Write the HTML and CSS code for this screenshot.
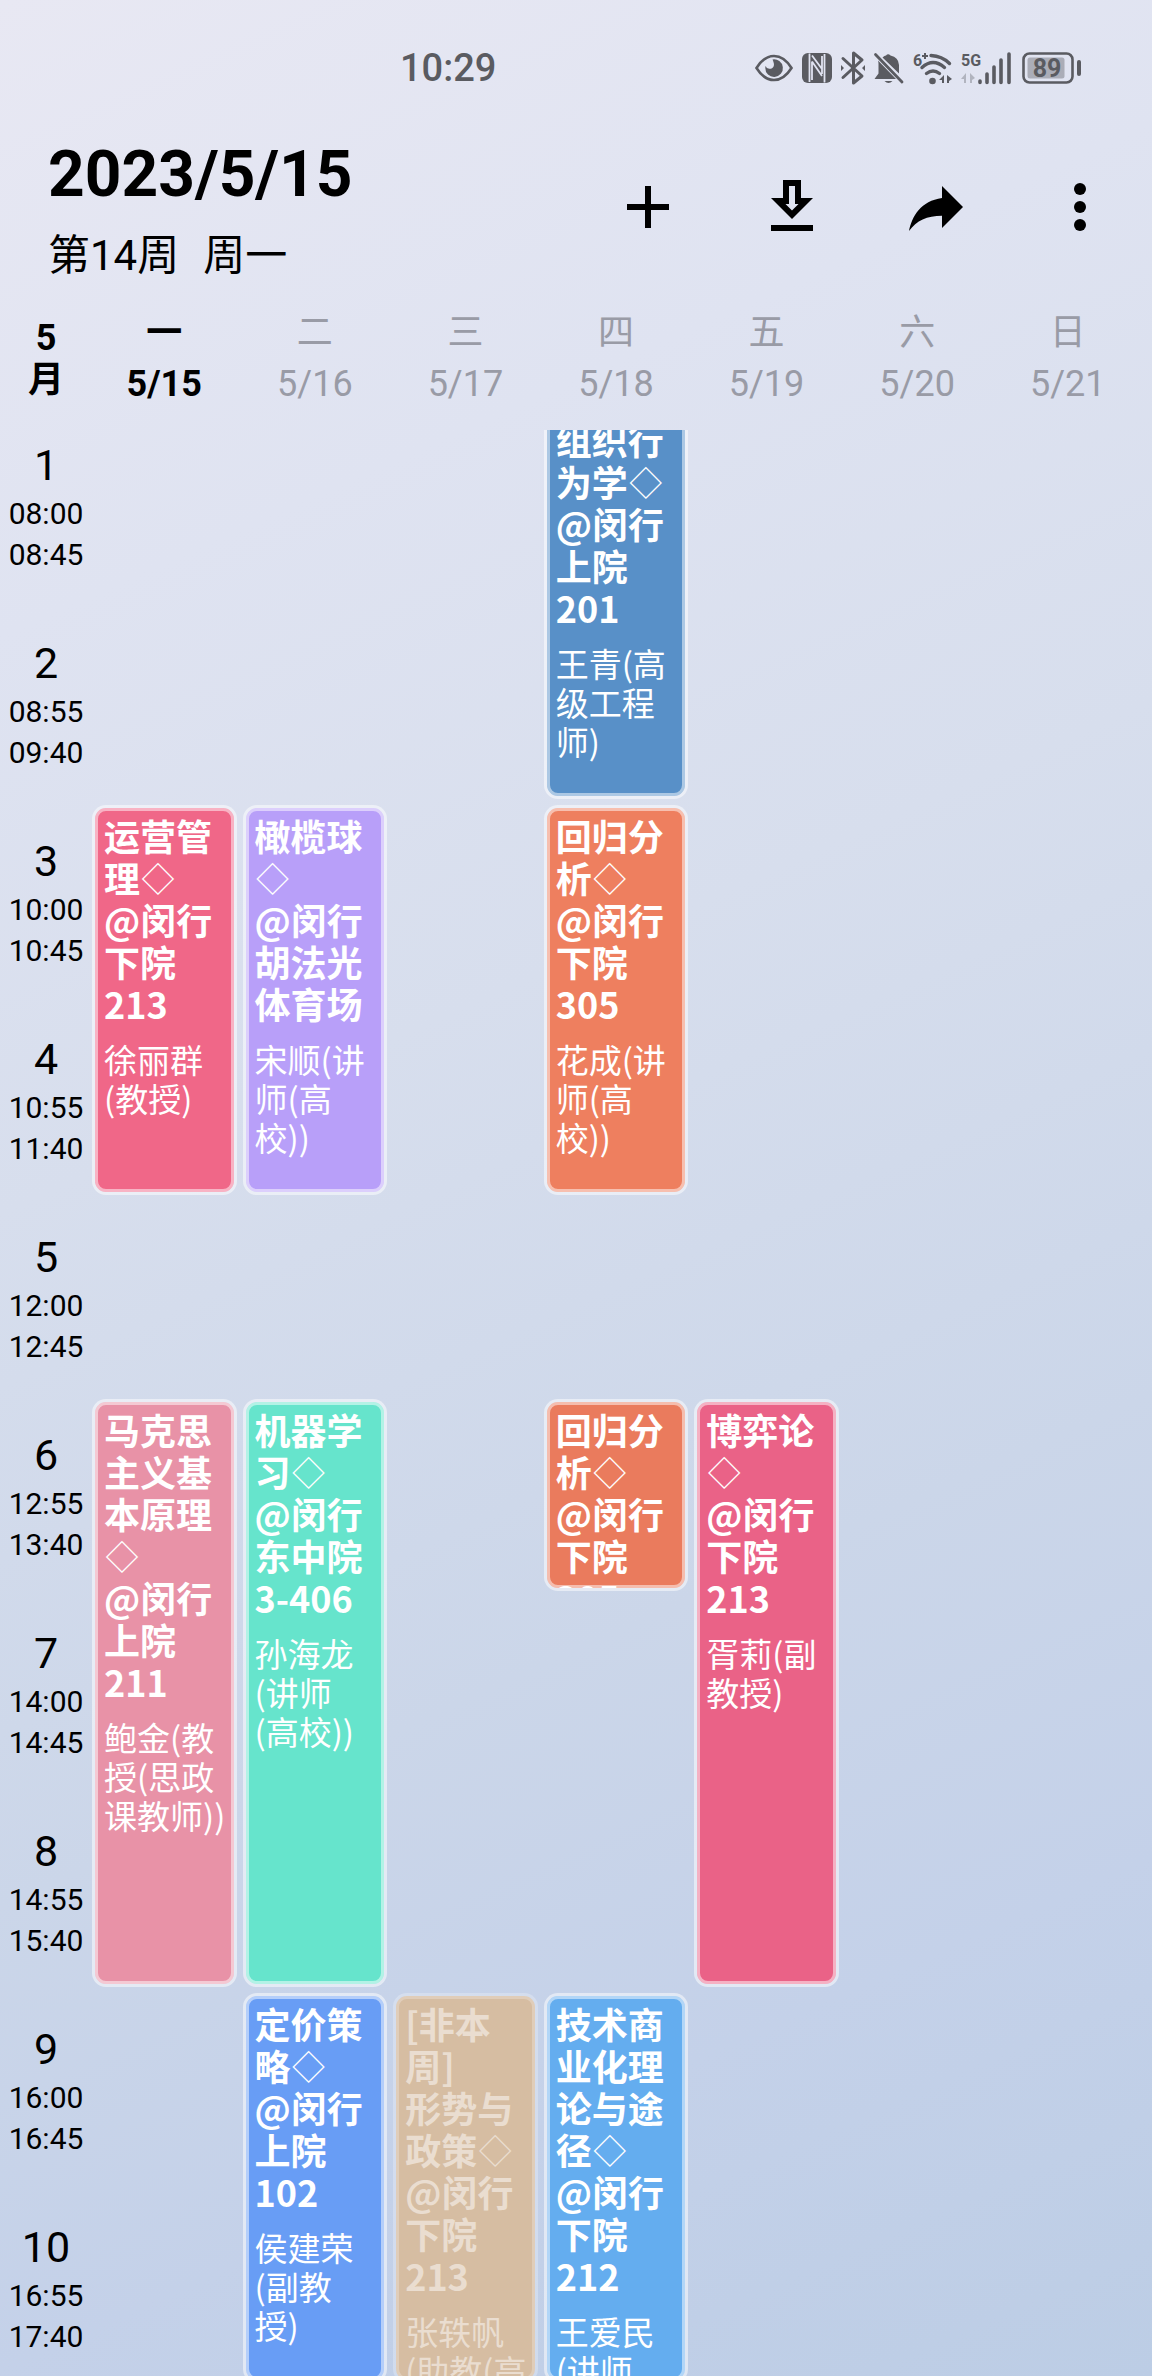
FILE: index.html
```html
<!DOCTYPE html>
<html lang="zh-CN">
<head>
<meta charset="utf-8">
<meta name="viewport" content="width=device-width, initial-scale=1">
<title>课程表</title>
<link rel="stylesheet" href="styles.css">
</head>
<body>
<div class="status-bar">
  <time class="clock">10:29</time>
  <div class="status-icons">
    <svg class="eye" width="38" height="34" viewBox="0 0 38 34" aria-hidden="true"><path d="M1.5 17Q9 5 19 5t17.500 12Q29 29 19 29T1.500 17Z" fill="none" stroke="currentColor" stroke-width="2.600"/><path d="M17.500 8.500A8.800 8.800 0 1 1 10.300 17q0-1 .3-2 1 3 4 2.800c4-.3 5-3.600 4-6.400-.3-1.200-.7-1.900-1.100-2.900Z" fill="currentColor"/></svg>
    <svg class="nfc" width="30" height="34" viewBox="0 0 30 34" aria-hidden="true"><rect y="2" width="30" height="30" rx="6" fill="currentColor"/><path d="M7.500 2.500V31M10 10.500v18.500M10 10.500l10 14.500M10 4.500l10 13.500M20 5v18M22.500 3v28.500" fill="none" stroke="#e0e3f1" stroke-width="1.800"/></svg>
    <svg class="bluetooth" width="24" height="34" viewBox="0 0 24 34" aria-hidden="true"><path d="M2 7.500 21 25l-8.500 7V2L21 9 2 26.500" fill="none" stroke="currentColor" stroke-width="3" stroke-linejoin="round" stroke-linecap="round"/><path d="M0 14v6l3-3zM24 14v6l-3-3z" fill="currentColor"/></svg>
    <svg class="bell" width="30" height="34" viewBox="0 0 30 34" aria-hidden="true"><path d="M4 9.500 22 28H.5l4-5.500V13q0-2-.5-3.500ZM8.500 6.500q2-1.800 3.500-2Q14 2 16.500 4.500q8 1.500 8.500 9.500v8.500ZM10.500 30h8q-4 4-8 0Z" fill="currentColor"/><path d="M1.500 3.500 28 31" stroke="currentColor" stroke-width="2.800" stroke-linecap="round"/></svg>
    <svg class="wifi" width="39" height="34" viewBox="0 0 39 34" aria-hidden="true"><text x="0" y="15" class="tiny">6</text><path d="M9 5h6M12 2v6" stroke="currentColor" stroke-width="2"/><path d="M18 4.500q11 .5 18.500 8M9 16.500q11-10 22.500 0M13.500 22.500q6.500-5 13 0" fill="none" stroke="currentColor" stroke-width="3.400" stroke-linecap="round"/><circle cx="19.500" cy="30" r="3.300" fill="currentColor"/><path d="M31 24v8h-2v-3H26zM34 24v8h2v-2l3-2z" fill="currentColor"/></svg>
    <svg class="signal" width="50" height="34" viewBox="0 0 50 34" aria-hidden="true"><text x="0" y="15" class="tiny">5G</text><path d="M5 22v10H3v-4H0zM9 22v10h2v-3l3-2z" fill="currentColor" opacity=".35"/><path d="M19 30v1.500M26 23v8.500M33 16v15.500M40 9v22.500M48 3v28.500" stroke="currentColor" stroke-width="3.600" stroke-linecap="round"/></svg>
    <svg class="battery" width="60" height="34" viewBox="0 0 60 34" aria-hidden="true"><rect x="1.500" y="2.500" width="49" height="29" rx="6" fill="none" stroke="currentColor" stroke-width="2.600"/><rect x="5.500" y="6.500" width="37" height="21" rx="2.500" fill="currentColor" opacity=".4"/><rect x="55" y="9" width="4" height="16" rx="2" fill="currentColor"/><text x="25" y="26" text-anchor="middle" class="level">89</text></svg>
  </div>
</div>

<header class="app-header">
  <div class="title">
    <h1>2023/5/15</h1>
    <p><span>第14周</span> <span>周一</span></p>
  </div>
  <nav class="actions">
    <button type="button" aria-label="添加"><svg viewBox="0 0 24 24"><path d="M11 5h2v6h6v2h-6v6h-2v-6H5v-2h6z"/></svg></button>
    <button type="button" aria-label="导入"><svg viewBox="0 0 24 24"><path fill-rule="evenodd" d="M19 9h-4V3H9v6H5l7 7zM11 11V5h2v6h1.170L12 13.170 9.830 11zM5 18h14v2H5z"/></svg></button>
    <button type="button" aria-label="分享"><svg viewBox="0 0 24 24"><path d="M21 12 14 5v4C7 10 4 15 3 20c2.500-3.500 6-5.100 11-5.100V19z"/></svg></button>
    <button type="button" aria-label="更多"><svg viewBox="0 0 24 24"><circle cx="12" cy="6" r="2"/><circle cx="12" cy="12" r="2"/><circle cx="12" cy="18" r="2"/></svg></button>
  </nav>
</header>

<div class="week columns">
  <div class="month">5<br>月</div>
  <div class="day today">一<br>5/15</div>
  <div class="day">二<br>5/16</div>
  <div class="day">三<br>5/17</div>
  <div class="day">四<br>5/18</div>
  <div class="day">五<br>5/19</div>
  <div class="day">六<br>5/20</div>
  <div class="day">日<br>5/21</div>
</div>

<main class="scroller">
  <div class="timetable columns">
    <div class="period r1"><b>1</b>08:00<br>08:45</div>
    <div class="period r2"><b>2</b>08:55<br>09:40</div>
    <div class="period r3"><b>3</b>10:00<br>10:45</div>
    <div class="period r4"><b>4</b>10:55<br>11:40</div>
    <div class="period r5"><b>5</b>12:00<br>12:45</div>
    <div class="period r6"><b>6</b>12:55<br>13:40</div>
    <div class="period r7"><b>7</b>14:00<br>14:45</div>
    <div class="period r8"><b>8</b>14:55<br>15:40</div>
    <div class="period r9"><b>9</b>16:00<br>16:45</div>
    <div class="period r10"><b>10</b>16:55<br>17:40</div>

    <article class="course mon r3 span2 pink"><h2>运营管<br>理<i>◇</i><br>@闵行<br>下院<br>213</h2><p>徐丽群<br>(教授)</p></article>
    <article class="course mon r6 span3 rose"><h2>马克思<br>主义基<br>本原理<br><i>◇</i><br>@闵行<br>上院<br>211</h2><p>鲍金(教<br>授(思政<br>课教师))</p></article>

    <article class="course tue r3 span2 purple"><h2>橄榄球<br><i>◇</i><br>@闵行<br>胡法光<br>体育场</h2><p>宋顺(讲<br>师(高<br>校))</p></article>
    <article class="course tue r6 span3 mint"><h2>机器学<br>习<i>◇</i><br>@闵行<br>东中院<br>3-406</h2><p>孙海龙<br>(讲师<br>(高校))</p></article>
    <article class="course tue r9 span2 indigo"><h2>定价策<br>略<i>◇</i><br>@闵行<br>上院<br>102</h2><p>侯建荣<br>(副教<br>授)</p></article>

    <article class="course wed r9 span2 tan inactive"><h2>[非本<br>周]<br>形势与<br>政策<i>◇</i><br>@闵行<br>下院<br>213</h2><p>张轶帆<br>(助教(高</p></article>

    <article class="course thu r1 span2 blue"><h2>组织行<br>为学<i>◇</i><br>@闵行<br>上院<br>201</h2><p>王青(高<br>级工程<br>师)</p></article>
    <article class="course thu r3 span2 orange"><h2>回归分<br>析<i>◇</i><br>@闵行<br>下院<br>305</h2><p>花成(讲<br>师(高<br>校))</p></article>
    <article class="course thu r6 span1 coral"><h2>回归分<br>析<i>◇</i><br>@闵行<br>下院<br>305</h2></article>
    <article class="course thu r9 span2 sky"><h2>技术商<br>业化理<br>论与途<br>径<i>◇</i><br>@闵行<br>下院<br>212</h2><p>王爱民<br>(讲师</p></article>

    <article class="course fri r6 span3 raspberry"><h2>博弈论<br><i>◇</i><br>@闵行<br>下院<br>213</h2><p>胥莉(副<br>教授)</p></article>
  </div>
</main>
</body>
</html>
```
FILE: styles.css
```css
* { box-sizing: border-box; }

body {
  margin: 0;
  height: 100vh;
  display: flex;
  flex-direction: column;
  overflow: hidden;
  background: linear-gradient(156deg, #e8e8f3 0%, #dfe3f1 22%, #d7deed 42%, #cbd6e9 66%, #c4d1e9 82%, #bccde5 100%);
  color: #000;
  font-family: Roboto, "Noto Sans CJK SC", sans-serif;
}

h1, h2, p { margin: 0; }

.columns {
  display: grid;
  grid-template-columns: 86px repeat(7, minmax(0, 1fr));
  gap: 6px;
  padding-right: 12px;
}

/* status bar */
.status-bar {
  display: flex;
  align-items: center;
  justify-content: space-between;
  height: 135px;
  padding: 0 70px 0 400px;
  color: #5a5b61;
}
.clock { font-size: 38px; font-weight: 500; }
.status-icons { display: flex; align-items: center; gap: 9px; }
.status-icons svg { display: block; overflow: visible; }
.status-icons .battery { margin-left: 2px; }
.tiny { font-size: 16px; font-weight: 700; fill: currentColor; }
.level { font-size: 25px; font-weight: 700; fill: currentColor; }

/* header */
.app-header {
  display: flex;
  align-items: flex-start;
  justify-content: space-between;
}
.title { padding-left: 48px; }
.title h1 { font-size: 64px; line-height: 80px; font-weight: 700; }
.title p { display: flex; gap: 24px; margin-top: 11px; font-size: 42px; line-height: 60px; }
.actions { display: flex; }
.actions button {
  display: flex;
  align-items: center;
  justify-content: center;
  width: 144px;
  height: 144px;
  padding: 0;
  border: 0;
  background: none;
  color: inherit;
}
.actions svg { width: 72px; height: 72px; fill: currentColor; }

/* weekday row */
.week {
  align-items: center;
  padding-top: 22px;
  padding-bottom: 20px;
  font-size: 36px;
  text-align: center;
}
.month { padding-left: 6px; line-height: 42px; font-weight: 700; }
.day { line-height: 51px; color: #999ba6; }
.today { color: #000; font-weight: 700; }

/* timetable, scrolled slightly past its first row */
.scroller { flex: 1; min-height: 0; overflow: hidden; }
.timetable { grid-auto-rows: 192px; margin-top: -21px; }

.period {
  grid-column: 1;
  padding: 28px 0 0 6px;
  font-size: 30px;
  line-height: 41px;
  text-align: center;
}
.period b { display: block; font-size: 43px; line-height: 56px; font-weight: 400; }

.course {
  overflow: hidden;
  padding: 6px 0 0 9px;
  border: 3px solid rgba(255, 255, 255, .5);
  border-radius: 14px;
  background-clip: padding-box;
  box-shadow: inset 0 0 0 3px rgba(255, 255, 255, .5);
  color: #fff;
  font-family: "Noto Sans CJK SC", sans-serif;
  white-space: nowrap;
}
.course h2 { font-size: 36px; line-height: 42px; font-weight: 700; }
.course h2 i {
  display: inline-block;
  width: 36px;
  height: 42px;
  vertical-align: top;
  font-size: 33px;
  font-style: normal;
  font-weight: 400;
  text-align: center;
}
.course p { margin-top: 16px; font-size: 33px; line-height: 39px; }

.mon { grid-column: 2; }
.tue { grid-column: 3; }
.wed { grid-column: 4; }
.thu { grid-column: 5; }
.fri { grid-column: 6; }

.r1 { grid-row-start: 1; }
.r2 { grid-row-start: 2; }
.r3 { grid-row-start: 3; }
.r4 { grid-row-start: 4; }
.r5 { grid-row-start: 5; }
.r6 { grid-row-start: 6; }
.r7 { grid-row-start: 7; }
.r8 { grid-row-start: 8; }
.r9 { grid-row-start: 9; }
.r10 { grid-row-start: 10; }
.span1 { grid-row-end: span 1; }
.span2 { grid-row-end: span 2; }
.span3 { grid-row-end: span 3; }

.pink { background-color: #f06788; }
.rose { background-color: #e892a7; }
.purple { background-color: #b89ff9; }
.mint { background-color: #66e4cc; }
.indigo { background-color: #689df5; }
.tan { background-color: #d6bda2; }
.blue { background-color: #5890c8; }
.orange { background-color: #ee7f5f; }
.coral { background-color: #ea7b5d; }
.sky { background-color: #64adef; }
.raspberry { background-color: #ea6287; }

.inactive {
  border-color: rgba(255, 255, 255, .25);
  box-shadow: inset 0 0 0 3px rgba(255, 255, 255, .25);
  color: #eaddd0;
}
```
